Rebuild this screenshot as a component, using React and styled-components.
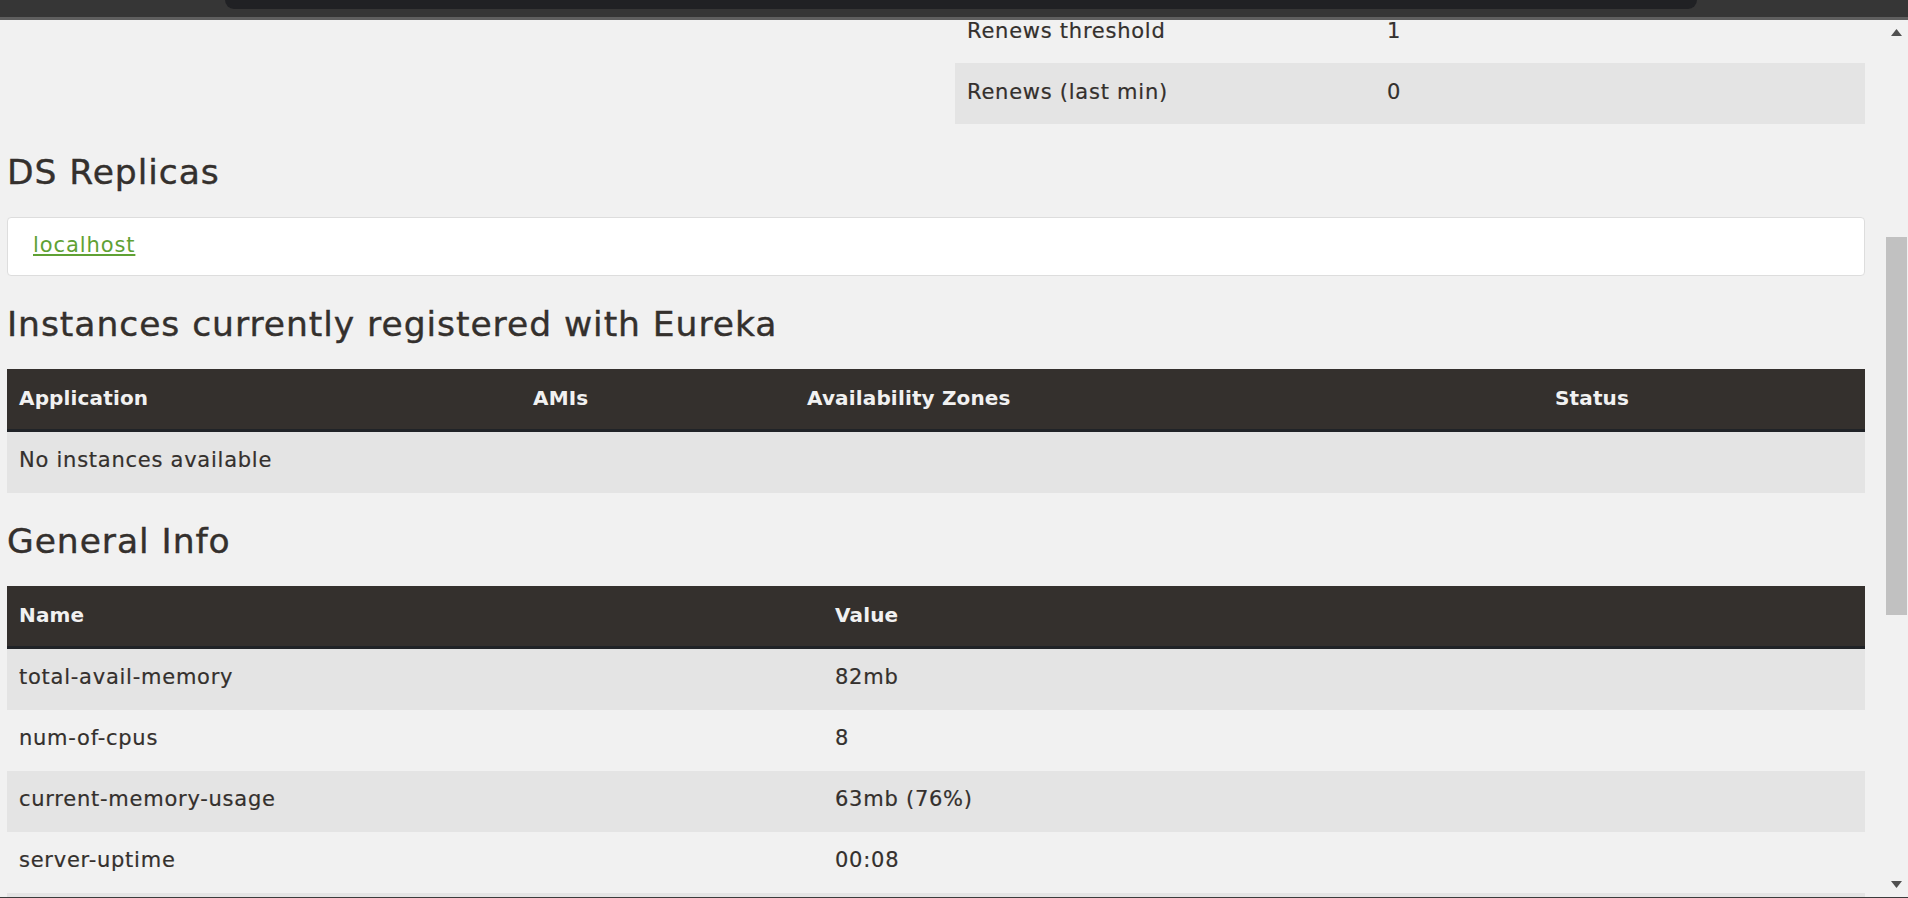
import React, { useLayoutEffect, useRef } from 'react';
import styled, { createGlobalStyle } from 'styled-components';

const renews = [
  { name: 'Renews threshold', value: '1' },
  { name: 'Renews (last min)', value: '0' },
];

const generalInfo = [
  { name: 'total-avail-memory', value: '82mb' },
  { name: 'num-of-cpus', value: '8' },
  { name: 'current-memory-usage', value: '63mb (76%)' },
  { name: 'server-uptime', value: '00:08' },
  { name: 'registered-replicas', value: 'http://localhost:8761/eureka/' },
  { name: 'unavailable-replicas', value: 'http://localhost:8761/eureka/,' },
  { name: 'available-replicas', value: '' },
];

const App = () => {
  const pageRef = useRef(null);

  // the page is shown scrolled a little, like in the screenshot
  useLayoutEffect(() => {
    if (pageRef.current) pageRef.current.scrollTop = 18;
  }, []);

  return (
    <Screen>
      <GlobalStyle />
      <TopBar>
        <TabPill />
      </TopBar>
      <Viewport>
        <Page ref={pageRef}>
          <StatusGrid>
            <div />
            <div>
              {renews.map((row, i) => (
                <Row key={row.name} $cols="420px 1fr" $striped={i % 2 === 1}>
                  <Cell>{row.name}</Cell>
                  <Cell>{row.value}</Cell>
                </Row>
              ))}
            </div>
          </StatusGrid>

          <Heading>DS Replicas</Heading>
          <ReplicaBox>
            <ReplicaLink href="#">localhost</ReplicaLink>
          </ReplicaBox>

          <Heading>Instances currently registered with Eureka</Heading>
          <HeaderRow $cols="514px 274px 748px 1fr">
            <HeadCell>Application</HeadCell>
            <HeadCell>AMIs</HeadCell>
            <HeadCell>Availability Zones</HeadCell>
            <HeadCell>Status</HeadCell>
          </HeaderRow>
          <Row $cols="1fr" $striped>
            <Cell>No instances available</Cell>
          </Row>

          <Heading>General Info</Heading>
          <HeaderRow $cols="816px 1fr">
            <HeadCell>Name</HeadCell>
            <HeadCell>Value</HeadCell>
          </HeaderRow>
          {generalInfo.map((row, i) => (
            <Row key={row.name} $cols="816px 1fr" $striped={i % 2 === 0}>
              <Cell>{row.name}</Cell>
              <Cell>{row.value}</Cell>
            </Row>
          ))}
        </Page>

        <Scrollbar>
          <ScrollButton>
            <svg width="11" height="7" viewBox="0 0 11 7">
              <path d="M5.5 0 L11 7 L0 7 Z" fill="#505050" />
            </svg>
          </ScrollButton>
          <ScrollTrack>
            <ScrollThumb />
          </ScrollTrack>
          <ScrollButton>
            <svg width="11" height="7" viewBox="0 0 11 7">
              <path d="M0 0 L11 0 L5.5 7 Z" fill="#505050" />
            </svg>
          </ScrollButton>
        </Scrollbar>
      </Viewport>
    </Screen>
  );
};

export default App;

const GlobalStyle = createGlobalStyle`
  html, body {
    margin: 0;
    padding: 0;
    height: 100%;
    overflow: hidden;
    background: #f1f1f1;
  }
  body {
    font-family: "DejaVu Sans", "Liberation Sans", sans-serif;
    color: #34302d;
  }
`;

const Screen = styled.div`
  display: flex;
  flex-direction: column;
  height: 100vh;
`;

const TopBar = styled.div`
  flex-shrink: 0;
  display: flex;
  height: 17px;
  background: #363636;
  border-bottom: 3px solid #5f5f5f;
`;

const TabPill = styled.div`
  margin-left: 225px;
  width: 1472px;
  height: 9px;
  background: #202124;
  border-radius: 0 0 10px 10px;
`;

const Viewport = styled.div`
  flex: 1;
  min-height: 0;
  display: flex;
  border-bottom: 1px solid #3c3c3c;
`;

const Page = styled.div`
  flex: 1;
  overflow: hidden;
  padding: 0 20px 0 7px;
`;

const StatusGrid = styled.div`
  display: grid;
  grid-template-columns: 948px 1fr;
`;

const Row = styled.div`
  display: grid;
  grid-template-columns: ${(p) => p.$cols};
  align-items: center;
  box-sizing: border-box;
  height: 61px;
  padding-bottom: 4px;
  background: ${(p) => (p.$striped ? '#e4e4e4' : '#f1f1f1')};
`;

const Cell = styled.div`
  padding: 0 12px;
  font-size: 21px;
  letter-spacing: 0.75px;
  white-space: nowrap;
  color: #34302d;
  -webkit-text-stroke: 0.2px #34302d;
`;

const HeaderRow = styled.div`
  display: grid;
  grid-template-columns: ${(p) => p.$cols};
  align-items: center;
  box-sizing: border-box;
  height: 63px;
  padding-bottom: 2px;
  background: #34302d;
  border-bottom: 3px solid #202327;
`;

const HeadCell = styled.div`
  padding: 0 12px;
  font-size: 20px;
  font-weight: 700;
  letter-spacing: 0.15px;
  color: #f1f1f1;
  white-space: nowrap;
`;

const Heading = styled.h2`
  margin: 30px 0 25px;
  font-size: 34.5px;
  font-weight: 400;
  line-height: 1.1;
  letter-spacing: 0.95px;
  color: #34302d;
  -webkit-text-stroke: 0.4px #34302d;
`;

const ReplicaBox = styled.div`
  display: flex;
  align-items: center;
  box-sizing: border-box;
  height: 59px;
  padding: 0 25px 2px;
  background: #ffffff;
  border: 1px solid #dddddd;
  border-radius: 4px;
`;

const ReplicaLink = styled.a`
  font-size: 21px;
  letter-spacing: 0.9px;
  color: #5fa134;
  text-decoration: underline;
`;

const Scrollbar = styled.div`
  flex-shrink: 0;
  width: 23px;
  display: flex;
  flex-direction: column;
  background: #f1f1f1;
`;

const ScrollButton = styled.div`
  height: 25px;
  display: flex;
  align-items: center;
  justify-content: center;
`;

const ScrollTrack = styled.div`
  flex: 1;
`;

const ScrollThumb = styled.div`
  margin: 192px 1px 0;
  height: 378px;
  background: #c1c1c1;
`;
